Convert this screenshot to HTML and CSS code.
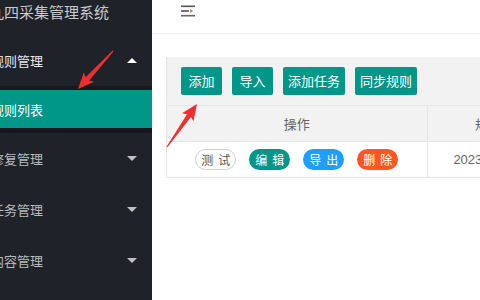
FILE: index.html
```html
<!DOCTYPE html>
<html lang="zh-CN">
<head>
<meta charset="utf-8">
<title>九四采集管理系统</title>
<link rel="stylesheet" href="styles.css">
</head>
<body>
<div class="app">
  <aside class="side">
    <div class="logo"><span class="shift-title">九四采集管理系统</span></div>
    <ul class="nav">
      <li class="nav-item open">
        <a class="nav-link"><span class="shift">规则管理</span><i class="caret up"></i></a>
        <div class="nav-child">
          <a class="child-link active"><span class="shift">规则列表</span></a>
        </div>
      </li>
      <li class="nav-item"><a class="nav-link"><span class="shift">修复管理</span><i class="caret"></i></a></li>
      <li class="nav-item"><a class="nav-link"><span class="shift">任务管理</span><i class="caret"></i></a></li>
      <li class="nav-item"><a class="nav-link"><span class="shift">内容管理</span><i class="caret"></i></a></li>
    </ul>
  </aside>
  <main class="main">
    <header class="topbar">
      <svg class="shrink" width="14" height="12" viewBox="0 0 14 12">
        <rect x="0" y="0.5" width="14" height="1.6" fill="#555"/>
        <rect x="0" y="5.2" width="8" height="1.6" fill="#555"/>
        <path d="M9.2 3.8 L12 6 L9.2 8.2 Z" fill="#c8843a"/>
        <rect x="0" y="9.9" width="14" height="1.6" fill="#666"/>
      </svg>
    </header>
    <section class="content">
      <div class="card">
        <div class="toolbar">
          <button class="btn">添加</button>
          <button class="btn">导入</button>
          <button class="btn">添加任务</button>
          <button class="btn">同步规则</button>
        </div>
        <table class="grid">
          <thead>
            <tr><th class="col-op">操作</th><th class="col-time">规则更新时间</th></tr>
          </thead>
          <tbody>
            <tr>
              <td class="col-op">
                <div class="ops">
                  <span class="tag tag-plain">测试</span>
                  <span class="tag tag-teal">编辑</span>
                  <span class="tag tag-blue">导出</span>
                  <span class="tag tag-red">删除</span>
                </div>
              </td>
              <td class="col-time">2023-10-12 10:20:35</td>
            </tr>
          </tbody>
        </table>
      </div>
    </section>
  </main>
  <svg class="marks" width="480" height="300" viewBox="0 0 480 300">
    <g transform="translate(113 51) rotate(132.6)">
      <polygon points="0,-0.6 37.7,-2.4 35.5,-7 51.7,0 35.5,7 37.7,2.4 0,0.6" fill="#ef2f2f"/>
    </g>
    <g transform="translate(167 147) rotate(-55.1)">
      <polygon points="0,-0.6 38.4,-2.4 36.2,-7 52.4,0 36.2,7 38.4,2.4 0,0.6" fill="#ef2f2f"/>
    </g>
  </svg>
</div>
</body>
</html>
```

FILE: styles.css
```css
* { box-sizing: border-box; }
html, body { margin: 0; padding: 0; }
body {
  width: 480px;
  height: 300px;
  overflow: hidden;
  background: #fff;
  font-family: "Noto Sans CJK SC", "Liberation Sans", sans-serif;
}
.app {
  position: relative;
  display: flex;
  width: 480px;
  height: 300px;
}
.side {
  width: 152px;
  flex: none;
  background: #20222a;
  overflow: hidden;
}
.logo {
  height: 35px;
  line-height: 24px;
  font-size: 15px;
  color: #c9c9c9;
  white-space: nowrap;
}
.shift-title { display: inline-block; margin-left: -11px; }
.nav { list-style: none; margin: 0; padding: 0; }
.nav-link {
  display: flex;
  align-items: center;
  justify-content: space-between;
  height: 51px;
  padding-right: 15px;
  font-size: 13px;
  color: #b9babd;
  white-space: nowrap;
}
.nav-item.open > .nav-link { color: #e8e8e8; }
.shift { display: inline-block; margin-left: -9px; }
.caret {
  width: 0;
  height: 0;
  border-left: 5px solid transparent;
  border-right: 5px solid transparent;
  border-top: 5px solid #c2c2c2;
}
.caret.up {
  border-top: 0;
  border-bottom: 5px solid #fff;
}
.nav-child {
  background: #17181d;
  padding: 4px 0 5px;
}
.child-link {
  display: flex;
  align-items: center;
  height: 38px;
  font-size: 13px;
  color: #fff;
  white-space: nowrap;
}
.child-link.active { background: #009688; }

.main {
  flex: 1;
  min-width: 0;
  overflow: hidden;
}
.topbar {
  height: 34px;
  border-bottom: 1px solid #f2f2f2;
  padding: 5px 0 0 29px;
}
.shrink { display: block; }
.content { padding: 23px 0 0 14px; }
.card {
  width: 400px;
  border-left: 1px solid #e6e6e6;
  overflow: hidden;
}
.toolbar {
  display: flex;
  gap: 10px;
  padding: 10px 14px;
  background: #f2f2f2;
}
.btn {
  min-width: 41px;
  height: 28px;
  padding: 0 5px;
  border: 0;
  border-radius: 2px;
  background: #009688;
  color: #fff;
  font-family: inherit;
  font-size: 13px;
  line-height: 28px;
}
.grid {
  border-collapse: collapse;
  table-layout: fixed;
  width: 433px;
}
.grid th, .grid td {
  height: 36px;
  padding: 0;
  text-align: center;
  font-size: 13px;
  font-weight: normal;
  color: #666;
  white-space: nowrap;
  border-top: 1px solid #e6e6e6;
  border-bottom: 1px solid #e6e6e6;
}
.grid th { background: #f2f2f2; }
.grid td { background: #fff; }
.col-op { width: 260px; border-right: 1px solid #e6e6e6; }
.col-time { width: 173px; font-family: "Liberation Sans", sans-serif; }
.ops {
  display: flex;
  justify-content: center;
  gap: 13px;
}
.tag {
  display: inline-flex;
  align-items: center;
  justify-content: center;
  width: 41px;
  height: 21px;
  padding-left: 5px;
  border-radius: 11px;
  font-size: 12px;
  letter-spacing: 5px;
  color: #fff;
}
.tag-plain { background: #fff; border: 1px solid #cfcfcf; color: #555; }
.tag-teal { background: #009688; }
.tag-blue { background: #1e9fff; }
.tag-red { background: #ff5722; }
.marks {
  position: absolute;
  left: 0;
  top: 0;
  pointer-events: none;
}
```
